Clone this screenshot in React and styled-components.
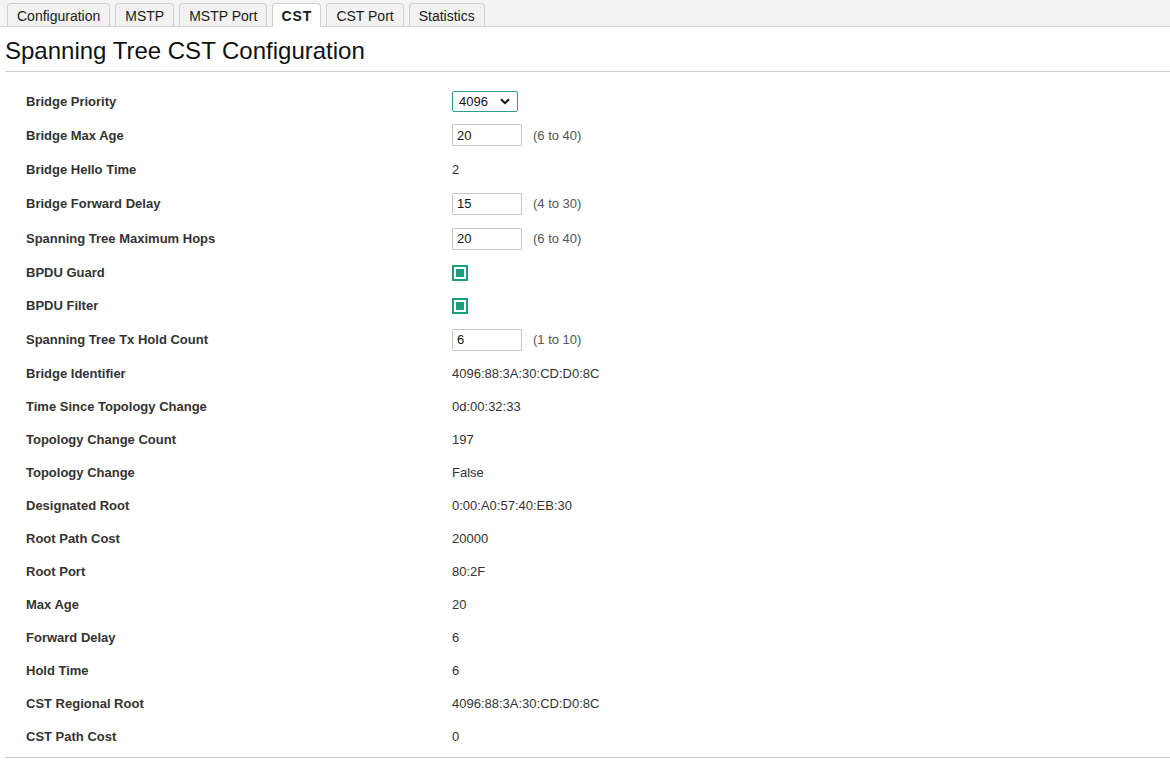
import styled, { createGlobalStyle } from "styled-components";

const GlobalStyle = createGlobalStyle`
  html, body {
    margin: 0;
    padding: 0;
    background: #fff;
    font-family: "Liberation Sans", Arial, sans-serif;
  }
`;

const tabs = ["Configuration", "MSTP", "MSTP Port", "CST", "CST Port", "Statistics"];

// h = row height in px, taken from the reference spacing
const rows = [
  { label: "Bridge Priority", kind: "select", value: "4096", h: 34 },
  { label: "Bridge Max Age", kind: "input", value: "20", hint: "(6 to 40)", h: 34 },
  { label: "Bridge Hello Time", kind: "text", value: "2", h: 34 },
  { label: "Bridge Forward Delay", kind: "input", value: "15", hint: "(4 to 30)", h: 35 },
  { label: "Spanning Tree Maximum Hops", kind: "input", value: "20", hint: "(6 to 40)", h: 35 },
  { label: "BPDU Guard", kind: "check", h: 33 },
  { label: "BPDU Filter", kind: "check", h: 33 },
  { label: "Spanning Tree Tx Hold Count", kind: "input", value: "6", hint: "(1 to 10)", h: 35 },
  { label: "Bridge Identifier", kind: "text", value: "4096:88:3A:30:CD:D0:8C", h: 33 },
  { label: "Time Since Topology Change", kind: "text", value: "0d:00:32:33", h: 33 },
  { label: "Topology Change Count", kind: "text", value: "197", h: 33 },
  { label: "Topology Change", kind: "text", value: "False", h: 33 },
  { label: "Designated Root", kind: "text", value: "0:00:A0:57:40:EB:30", h: 33 },
  { label: "Root Path Cost", kind: "text", value: "20000", h: 33 },
  { label: "Root Port", kind: "text", value: "80:2F", h: 33 },
  { label: "Max Age", kind: "text", value: "20", h: 33 },
  { label: "Forward Delay", kind: "text", value: "6", h: 33 },
  { label: "Hold Time", kind: "text", value: "6", h: 33 },
  { label: "CST Regional Root", kind: "text", value: "4096:88:3A:30:CD:D0:8C", h: 33 },
  { label: "CST Path Cost", kind: "text", value: "0", h: 33 },
];

export default function App() {
  return (
    <Page>
      <GlobalStyle />
      <TabBar>
        {tabs.map((t) => (
          <Tab key={t} $active={t === "CST"}>{t}</Tab>
        ))}
      </TabBar>
      <Title>Spanning Tree CST Configuration</Title>
      <Form>
        {rows.map((r) => (
          <Row key={r.label} $h={r.h}>
            <Label>{r.label}</Label>
            <Value>
              {r.kind === "select" && (
                <Select>
                  <span>{r.value}</span>
                  <svg width="10" height="7" viewBox="0 0 10 7">
                    <path d="M1 1.2 L5 5.2 L9 1.2" fill="none" stroke="#111" strokeWidth="2" />
                  </svg>
                </Select>
              )}
              {r.kind === "input" && (
                <>
                  <Input defaultValue={r.value} />
                  <Hint>{r.hint}</Hint>
                </>
              )}
              {r.kind === "check" && <Check />}
              {r.kind === "text" && r.value}
            </Value>
          </Row>
        ))}
      </Form>
    </Page>
  );
}

const Page = styled.div`
  width: 1170px;
  min-height: 761px;
  background: #fff;
`;

const TabBar = styled.div`
  display: flex;
  align-items: flex-end;
  gap: 5px;
  height: 26px;
  padding-left: 7px;
  background: #f4f4f4;
  border-bottom: 1px solid #d0d0d0;
`;

const Tab = styled.div`
  box-sizing: border-box;
  padding: 1px ${({ $active }) => ($active ? "8px" : "9px")} 0;
  display: flex;
  align-items: center;
  border: 1px solid #cfcfcf;
  border-bottom: none;
  border-radius: 4px 4px 0 0;
  background: ${({ $active }) => ($active ? "#fff" : "#f2f2f2")};
  margin-bottom: ${({ $active }) => ($active ? "-1px" : "0")};
  height: ${({ $active }) => ($active ? "24px" : "23px")};
  font-size: 14px;
  font-weight: ${({ $active }) => ($active ? "bold" : "normal")};
  letter-spacing: ${({ $active }) => ($active ? "1px" : "0")};
  color: #1a1a1a;
  white-space: nowrap;
`;

const Title = styled.h1`
  margin: 0 0 0 5px;
  padding: 11px 0 7px;
  font-size: 24px;
  font-weight: normal;
  color: #111;
  border-bottom: 1px solid #cfcfcf;
  line-height: 26px;
`;

const Form = styled.div`
  display: flex;
  flex-direction: column;
  margin-left: 5px;
  padding: 12px 0 4px 21px;
  border-bottom: 1px solid #c8c8c8;
`;

const Row = styled.div`
  display: grid;
  grid-template-columns: 426px 1fr;
  align-items: center;
  height: ${({ $h }) => $h}px;
`;

const Label = styled.div`
  font-size: 13px;
  font-weight: bold;
  color: #333;
`;

const Value = styled.div`
  display: flex;
  align-items: center;
  font-size: 13px;
  color: #333;
`;

const Select = styled.div`
  width: 66px;
  height: 21px;
  box-sizing: border-box;
  border: 1px solid #2d9f8a;
  border-radius: 2px;
  display: flex;
  align-items: center;
  justify-content: space-between;
  padding: 0 7px 0 6px;
  font-size: 13px;
  color: #111;
`;

const Input = styled.input`
  width: 70px;
  height: 22px;
  box-sizing: border-box;
  border: 1px solid #c6c6c6;
  border-radius: 1px;
  padding: 0 4px;
  font-family: "Liberation Sans", Arial, sans-serif;
  font-size: 13px;
  color: #111;
  outline: none;
`;

const Hint = styled.span`
  margin-left: 11px;
  font-size: 13px;
  color: #555;
`;

const Check = styled.div`
  width: 16px;
  height: 16px;
  box-sizing: border-box;
  border: 2px solid #1a9f80;
  display: flex;
  align-items: center;
  justify-content: center;
  &::after {
    content: "";
    width: 8px;
    height: 8px;
    background: #1a9f80;
  }
`;
